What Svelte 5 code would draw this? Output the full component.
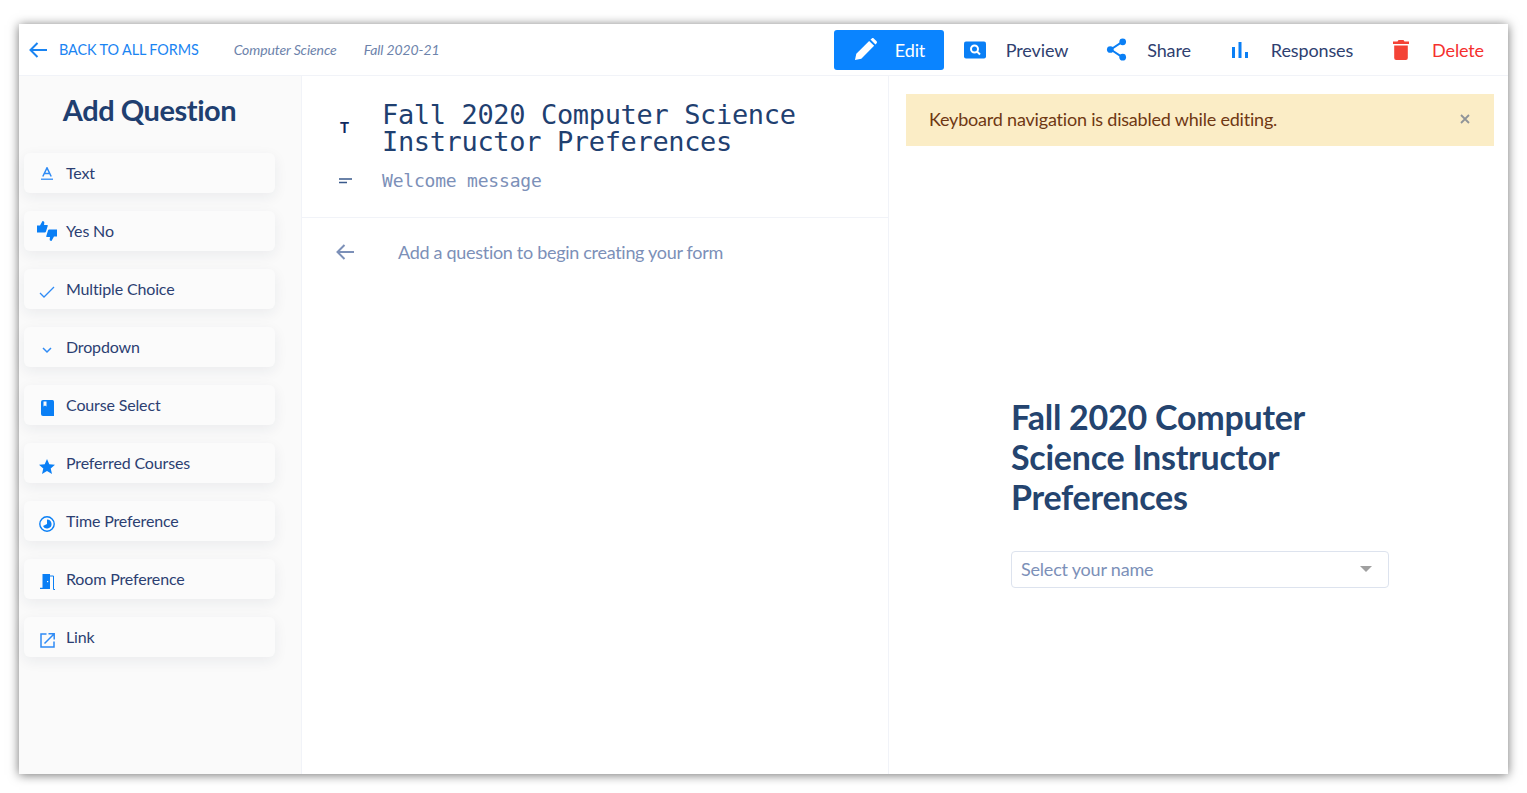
<script lang="ts">
  const QUESTION_TYPES = [
    { label: 'Text', icon: 'text' },
    { label: 'Yes No', icon: 'thumbs' },
    { label: 'Multiple Choice', icon: 'check' },
    { label: 'Dropdown', icon: 'chevron' },
    { label: 'Course Select', icon: 'book' },
    { label: 'Preferred Courses', icon: 'star' },
    { label: 'Time Preference', icon: 'clock' },
    { label: 'Room Preference', icon: 'door' },
    { label: 'Link', icon: 'link' },
  ]
</script>

<div class="page">
<div class="window">
  <header>
    <a class="back">
      <svg class="back-arrow" viewBox="0 0 20 20" width="20" height="20">
        <path d="M19 10H2.500M9.500 3L2.500 10l7 7" fill="none" stroke="currentColor" stroke-width="2" />
      </svg>
      BACK TO ALL FORMS
    </a>
    <span class="crumb first">Computer Science</span>
    <span class="crumb">Fall 2020-21</span>

    <nav>
      <button class="edit">
        <svg viewBox="0 0 24 24" width="23" height="23">
          <path d="M1 23l1.400-6.600L15.800 3l5.200 5.200L7.600 21.600zM17.200 1.600l1.400-1.200c.6-.5 1.400-.5 2 0l3 3c.5.6.5 1.400 0 2l-1.200 1.400z" fill="#fff" />
        </svg>
        Edit
      </button>
      <button class="preview">
        <svg viewBox="0 0 22 18" width="22" height="18">
          <rect width="22" height="17" y="0.500" rx="2" fill="#0a7ff5" />
          <circle cx="10.500" cy="8" r="3.500" fill="none" stroke="#fff" stroke-width="2" />
          <path d="M13 10.500l3 3" stroke="#fff" stroke-width="2" />
        </svg>
        Preview
      </button>
      <button class="share">
        <svg viewBox="0 0 22 24" width="21" height="23">
          <path d="M17 4L5 12l12 8" fill="none" stroke="#0a7ff5" stroke-width="2" />
          <circle cx="17.500" cy="4" r="3.500" fill="#0a7ff5" />
          <circle cx="4.500" cy="12" r="3.500" fill="#0a7ff5" />
          <circle cx="17.500" cy="20" r="3.500" fill="#0a7ff5" />
        </svg>
        Share
      </button>
      <button class="responses">
        <svg viewBox="0 0 16 16" width="16" height="16">
          <rect x="0" y="5" width="3" height="11" fill="#0a7ff5" />
          <rect x="6.500" y="0" width="3" height="16" fill="#0a7ff5" />
          <rect x="13" y="10" width="3" height="6" fill="#0a7ff5" />
        </svg>
        Responses
      </button>
      <button class="delete">
        <svg viewBox="0 0 16 21" width="16" height="21">
          <path d="M0 2.500h4.500L5.500 1h5l1 1.500H16v2.500H0zM1.200 6.500h13.600V19a2 2 0 0 1-2 2H3.200a2 2 0 0 1-2-2z" fill="#f44336" />
        </svg>
        Delete
      </button>
    </nav>
  </header>

  <div class="columns">
    <aside>
      <h2>Add Question</h2>
      <div class="cards">
        {#each QUESTION_TYPES as q}
          <div class="card">
            <span class="icon">
              {#if q.icon === 'text'}
                <svg viewBox="0 0 12 13" width="12" height="13">
                  <path d="M1.800 9.500L6 .8l4.200 8.700M3.200 6.500h5.600" fill="none" stroke="#2f8bf5" stroke-width="1.500" />
                  <path d="M0 12.200h12" stroke="#2f8bf5" stroke-width="1.300" />
                </svg>
              {:else if q.icon === 'thumbs'}
                <svg viewBox="0 0 20 20" width="20" height="20">
                  <path d="M0 4.500h3L5.500 0C7 0 7.500 1 7.300 2L7 4h3c.6 0 .9.500.7 1.100L9 10.600c-.2.600-.6.900-1.200.9H0z" fill="#0a7ff5" />
                  <path d="M20 15.500h-3L14.500 20C13 20 12.500 19 12.700 18l.3-2h-3c-.6 0-.9-.5-.7-1.100L11 9.400c.2-.6.600-.9 1.200-.9H20z" fill="#0a7ff5" />
                </svg>
              {:else if q.icon === 'check'}
                <svg class="low" viewBox="0 0 16 12" width="16" height="12">
                  <path d="M1 7l4 4L15 1" fill="none" stroke="#2f8bf5" stroke-width="1.300" />
                </svg>
              {:else if q.icon === 'chevron'}
                <svg class="low" viewBox="0 0 10 7" width="10" height="7">
                  <path d="M1 1l4 4 4-4" fill="none" stroke="#2f8bf5" stroke-width="1.500" />
                </svg>
              {:else if q.icon === 'book'}
                <svg class="low" viewBox="0 0 13 16" width="13" height="16">
                  <path d="M2 0h9.500A1.500 1.500 0 0 1 13 1.500V16H2a2 2 0 0 1-2-2V2a2 2 0 0 1 2-2z" fill="#0a7ff5" />
                  <path d="M2.500 1.500h3v5l-1.500-1-1.500 1z" fill="#fafafa" />
                </svg>
              {:else if q.icon === 'star'}
                <svg class="low" viewBox="0 0 16 15" width="16" height="15">
                  <path d="M8 0l2.300 5.200 5.700.5-4.300 3.700 1.300 5.600L8 12l-5 3 1.300-5.600L0 5.700l5.700-.5z" fill="#0a7ff5" />
                </svg>
              {:else if q.icon === 'clock'}
                <svg class="low" viewBox="0 0 16 16" width="16" height="16">
                  <circle cx="8" cy="8" r="7.200" fill="none" stroke="#0a7ff5" stroke-width="1.400" />
                  <path d="M8 8V3.500A4.500 4.500 0 1 1 4 10z" fill="#0a7ff5" />
                </svg>
              {:else if q.icon === 'door'}
                <svg class="low" viewBox="0 0 15 16" width="15" height="16">
                  <path d="M2.500 0H10v15H0v-1.200h2.500z" fill="#0a7ff5" />
                  <path d="M10 2h3.500v13.500H15" fill="none" stroke="#0a7ff5" stroke-width="1" />
                  <rect x="7" y="7" width="1.200" height="1.200" fill="#fff" />
                </svg>
              {:else if q.icon === 'link'}
                <svg class="low" viewBox="0 0 15 15" width="15" height="15">
                  <path d="M6.500 1H1v13h13V8.500" fill="none" stroke="#2f8bf5" stroke-width="1.500" />
                  <path d="M4.500 10.500L13.500 1.500M8.500 .8h5.700v5.700" fill="none" stroke="#2f8bf5" stroke-width="1.500" />
                </svg>
              {/if}
            </span>
            <span class="card-label">{q.label}</span>
          </div>
        {/each}
      </div>
    </aside>

    <main>
      <div class="form-head">
        <div class="title-row">
          <span class="t-mark">T</span>
          <div class="title-mono">Fall 2020 Computer Science<br />Instructor Preferences</div>
        </div>
        <div class="welcome-row">
          <svg viewBox="0 0 13 6" width="13" height="6">
            <path d="M0 1h13M0 4.500h8" stroke="#3a5a8c" stroke-width="1.400" />
          </svg>
          <span>Welcome message</span>
        </div>
      </div>
      <div class="hint">
        <svg viewBox="0 0 18 16" width="18" height="16">
          <path d="M18 8H1.500M8.500 1L1.500 8l7 7" fill="none" stroke="#7c90b8" stroke-width="2" />
        </svg>
        <span>Add a question to begin creating your form</span>
      </div>
    </main>

    <section class="preview-pane">
      <div class="alert">
        <span>Keyboard navigation is disabled while editing.</span>
        <svg viewBox="0 0 10 10" width="10" height="10">
          <path d="M1 1l8 8M9 1l-8 8" stroke="#8f9498" stroke-width="1.800" />
        </svg>
      </div>
      <div class="form-view">
        <h1>Fall 2020 Computer Science Instructor Preferences</h1>
        <div class="select">
          <span>Select your name</span>
          <i class="caret"></i>
        </div>
      </div>
    </section>
  </div>
</div>
</div>

<style>
  :global(body) {
    background: #fff;
    font-family: Lato, "Open Sans", sans-serif;
  }
  .page {
    box-sizing: border-box;
    height: 793px;
    padding: 24px 0 0 19px;
    overflow: hidden;
  }
  .window {
    box-sizing: border-box;
    width: 1489px;
    height: 750px;
    background: #fff;
    box-shadow: 0 1px 10px rgba(0, 0, 0, 0.55);
    display: flex;
    flex-direction: column;
  }
  header {
    height: 52px;
    flex: 0 0 auto;
    box-sizing: border-box;
    display: flex;
    align-items: center;
    border-bottom: 1px solid #f1f3f8;
    padding: 0 24px 0 9px;
  }
  .back {
    display: flex;
    align-items: center;
    gap: 11px;
    color: #1a84f2;
    font-size: 14.4px;
    letter-spacing: -0.1px;
  }
  .back-arrow { color: #1a84f2; }
  .crumb {
    font-style: italic;
    font-size: 14px;
    letter-spacing: -0.1px;
    color: #6d83ab;
    margin-left: 27px;
  }
  .crumb.first { margin-left: 35px; }
  nav {
    margin-left: auto;
    display: flex;
    align-items: center;
  }
  button {
    border: 0;
    background: none;
    font: inherit;
    font-size: 18px;
    letter-spacing: -0.13px;
    color: #2f3f70;
    display: flex;
    align-items: center;
    padding: 0;
    line-height: 24px;
  }
  .edit {
    width: 110px;
    height: 40px;
    box-sizing: border-box;
    background: #0a84ff;
    color: #fff;
    border-radius: 3px;
    padding-left: 20px;
    gap: 18px;
  }
  .preview { margin-left: 20px; gap: 20px; }
  .share { margin-left: 38px; gap: 20px; }
  .responses { margin-left: 41px; gap: 23px; }
  .delete { margin-left: 40px; gap: 23px; color: #f5302e; }

  .columns {
    flex: 1;
    min-height: 0;
    display: flex;
  }
  aside {
    width: 283px;
    flex: 0 0 auto;
    box-sizing: border-box;
    background: #fafafa;
    padding: 0 26px 0 5px;
    border-right: 1px solid #f1f3f8;
  }
  h2 {
    margin: 16px 0 25px;
    text-align: center;
    font-size: 29px;
    line-height: 36px;
    font-weight: 700;
    letter-spacing: -0.45px;
    color: #1f3f70;
  }
  .cards {
    display: flex;
    flex-direction: column;
    gap: 18px;
  }
  .card {
    height: 40px;
    display: flex;
    align-items: center;
    border-radius: 6px;
    background: #fbfbfb;
    box-shadow: 0 4px 14px rgba(30, 40, 70, 0.07);
    font-size: 16px;
    letter-spacing: -0.15px;
    color: #2c3f72;
  }
  .card-label { margin-top: -2px; }
  .icon {
    width: 46px;
    flex: 0 0 auto;
    display: flex;
    justify-content: center;
    margin-right: -4px;
  }
  .low { position: relative; top: 3px; }

  main {
    width: 587px;
    flex: 0 0 auto;
    box-sizing: border-box;
    border-right: 1px solid #f1f3f8;
  }
  .form-head {
    height: 142px;
    box-sizing: border-box;
    border-bottom: 1px solid #f1f3f8;
    padding: 25px 0 0 37px;
  }
  .title-row {
    display: flex;
    align-items: center;
  }
  .t-mark {
    width: 43px;
    flex: 0 0 auto;
    font-size: 15px;
    line-height: 15px;
    font-weight: 700;
    color: #10295f;
    position: relative;
    top: -1px;
    left: 1px;
  }
  .title-mono {
    font-family: "DejaVu Sans Mono", monospace;
    font-size: 27px;
    line-height: 27px;
    color: #1f4070;
    letter-spacing: -0.35px;
  }
  .welcome-row {
    display: flex;
    align-items: center;
    gap: 30px;
    margin-top: 14px;
    font-family: "DejaVu Sans Mono", monospace;
    font-size: 18px;
    line-height: 24px;
    letter-spacing: -0.2px;
    color: #7c90b8;
  }
  .hint {
    display: flex;
    align-items: center;
    gap: 44px;
    padding: 23px 0 0 34px;
    font-size: 18px;
    letter-spacing: -0.3px;
    color: #7c90b8;
  }

  .preview-pane {
    flex: 1;
    min-width: 0;
    box-sizing: border-box;
    padding: 18px 14px 0 17px;
  }
  .alert {
    height: 52px;
    box-sizing: border-box;
    background: #fbedc6;
    color: #6f3813;
    font-size: 18px;
    letter-spacing: -0.2px;
    display: flex;
    align-items: center;
    justify-content: space-between;
    padding: 0 24px 2px 23px;
  }
  .form-view {
    width: 378px;
    margin: 251px 0 0 105px;
  }
  h1 {
    margin: 0;
    font-size: 34px;
    line-height: 40px;
    font-weight: 700;
    letter-spacing: -0.25px;
    color: #24446f;
  }
  .select {
    margin-top: 34px;
    height: 37px;
    box-sizing: border-box;
    border: 1px solid #dde3ee;
    border-radius: 4px;
    display: flex;
    align-items: center;
    justify-content: space-between;
    padding: 0 16px 2px 9px;
    font-size: 18px;
    letter-spacing: -0.2px;
    color: #7c90b8;
  }
  .caret {
    width: 0;
    height: 0;
    border-left: 6px solid transparent;
    border-right: 6px solid transparent;
    border-top: 6px solid #a0a0a0;
  }
</style>
